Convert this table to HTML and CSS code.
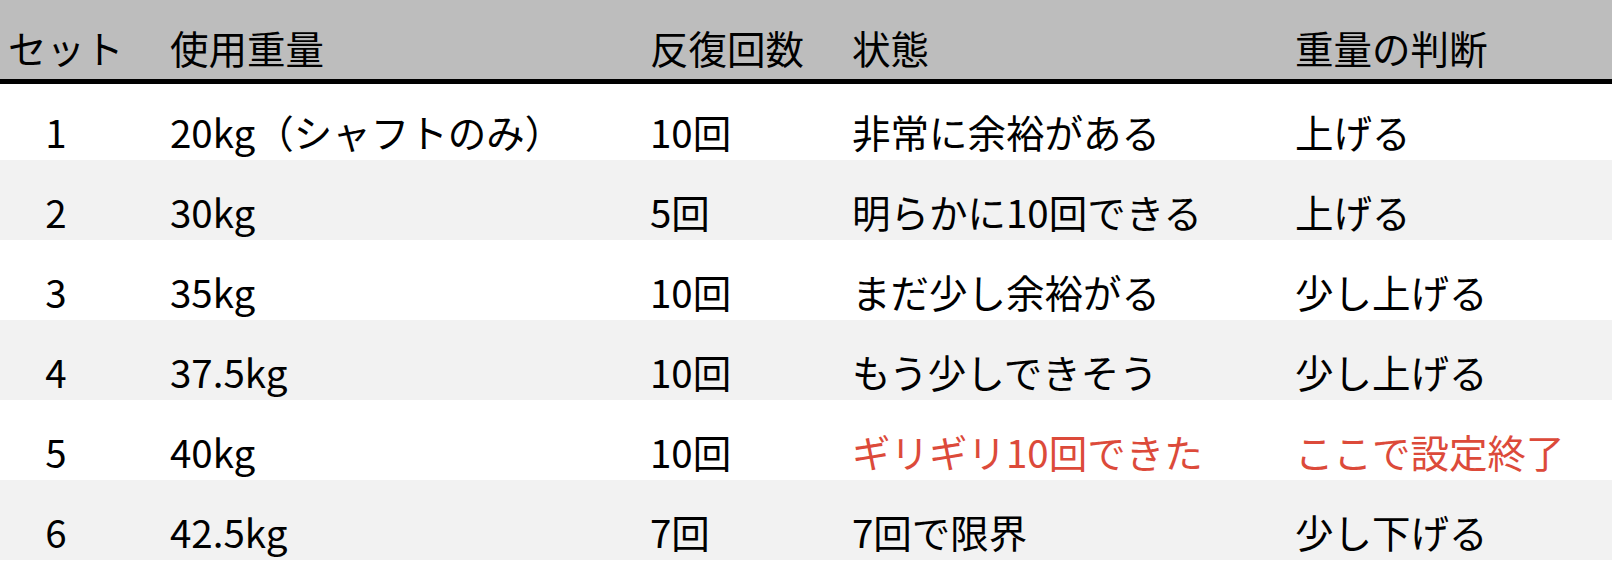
FILE: index.html
```html
<!DOCTYPE html>
<html lang="ja">
<head>
<meta charset="utf-8">
<title>重量設定</title>
<link rel="stylesheet" href="styles.css">
</head>
<body>
<table class="sets">
  <colgroup>
    <col class="c-set">
    <col class="c-weight">
    <col class="c-reps">
    <col class="c-state">
    <col class="c-judge">
  </colgroup>
  <thead>
    <tr>
      <th>セット</th>
      <th>使用重量</th>
      <th>反復回数</th>
      <th>状態</th>
      <th>重量の判断</th>
    </tr>
  </thead>
  <tbody>
    <tr>
      <td class="num">1</td>
      <td>20kg（シャフトのみ）</td>
      <td>10回</td>
      <td>非常に余裕がある</td>
      <td>上げる</td>
    </tr>
    <tr>
      <td class="num">2</td>
      <td>30kg</td>
      <td>5回</td>
      <td>明らかに10回できる</td>
      <td>上げる</td>
    </tr>
    <tr>
      <td class="num">3</td>
      <td>35kg</td>
      <td>10回</td>
      <td>まだ少し余裕がる</td>
      <td>少し上げる</td>
    </tr>
    <tr>
      <td class="num">4</td>
      <td>37.5kg</td>
      <td>10回</td>
      <td>もう少しできそう</td>
      <td>少し上げる</td>
    </tr>
    <tr>
      <td class="num">5</td>
      <td>40kg</td>
      <td>10回</td>
      <td class="alert">ギリギリ10回できた</td>
      <td class="alert">ここで設定終了</td>
    </tr>
    <tr>
      <td class="num">6</td>
      <td>42.5kg</td>
      <td>7回</td>
      <td>7回で限界</td>
      <td>少し下げる</td>
    </tr>
  </tbody>
</table>
</body>
</html>
```
FILE: styles.css
```css
html, body {
  margin: 0;
  padding: 0;
  background: #ffffff;
}

body {
  font-family: "Noto Sans CJK JP", "Noto Sans", sans-serif;
  font-size: 38.5px;
  color: #000000;
}

.sets {
  width: 1612px;
  table-layout: fixed;
  border-collapse: separate;
  border-spacing: 0;
}

.c-set { width: 162px; }
.c-weight { width: 480px; }
.c-reps { width: 202px; }
.c-state { width: 443px; }
.c-judge { width: 325px; }

.sets th {
  background: #bdbdbd;
  font-weight: 400;
  text-align: left;
  line-height: 55px;
  padding: 20px 8px 4px;
  border-bottom: 5px solid #000000;
  white-space: nowrap;
}

.sets td {
  line-height: 55px;
  padding: 24px 8px 1px;
  white-space: nowrap;
}

.sets tbody tr:first-child td {
  padding-top: 20px;
}

.sets tbody tr:nth-child(even) td {
  background: #f2f2f2;
}

.sets td.num {
  text-align: center;
  padding-right: 58px;
}

.sets td.alert {
  color: #dc4a3a;
}
```
